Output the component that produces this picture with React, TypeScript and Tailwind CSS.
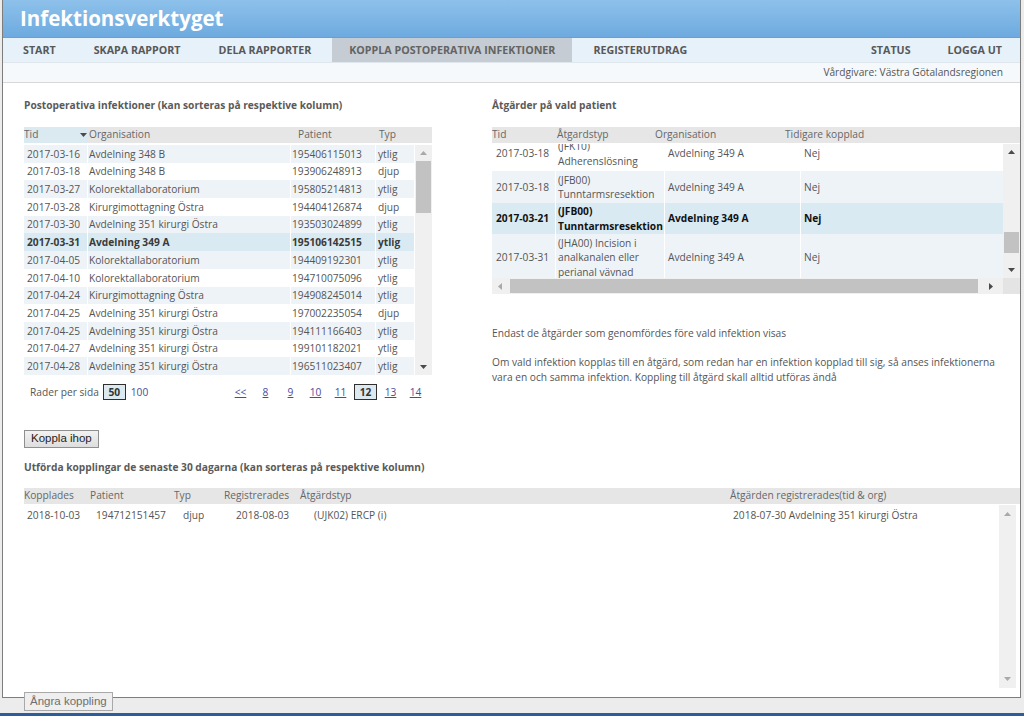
import React from "react";

const leftRows: string[][] = [
  ["2017-03-16", "Avdelning 348 B", "195406115013", "ytlig"],
  ["2017-03-18", "Avdelning 348 B", "193906248913", "djup"],
  ["2017-03-27", "Kolorektallaboratorium", "195805214813", "ytlig"],
  ["2017-03-28", "Kirurgimottagning Östra", "194404126874", "djup"],
  ["2017-03-30", "Avdelning 351 kirurgi Östra", "193503024899", "ytlig"],
  ["2017-03-31", "Avdelning 349 A", "195106142515", "ytlig"],
  ["2017-04-05", "Kolorektallaboratorium", "194409192301", "ytlig"],
  ["2017-04-10", "Kolorektallaboratorium", "194710075096", "ytlig"],
  ["2017-04-24", "Kirurgimottagning Östra", "194908245014", "ytlig"],
  ["2017-04-25", "Avdelning 351 kirurgi Östra", "197002235054", "djup"],
  ["2017-04-25", "Avdelning 351 kirurgi Östra", "194111166403", "ytlig"],
  ["2017-04-27", "Avdelning 351 kirurgi Östra", "199101182021", "ytlig"],
  ["2017-04-28", "Avdelning 351 kirurgi Östra", "196511023407", "ytlig"],
];

type RRow = { d: string; a: string[]; o: string; n: string; kind: "white" | "light" | "sel"; h: string };
const rightRows: RRow[] = [
  { d: "2017-03-18", a: ["(JFK10)", "Adherenslösning"], o: "Avdelning 349 A", n: "Nej", kind: "white", h: "h-[32px] pb-[3px]" },
  { d: "2017-03-18", a: ["(JFB00)", "Tunntarmsresektion"], o: "Avdelning 349 A", n: "Nej", kind: "light", h: "h-[32px]" },
  { d: "2017-03-21", a: ["(JFB00)", "Tunntarmsresektion"], o: "Avdelning 349 A", n: "Nej", kind: "sel", h: "h-[31px]" },
  { d: "2017-03-31", a: ["(JHA00) Incision i", "analkanalen eller", "perianal vävnad"], o: "Avdelning 349 A", n: "Nej", kind: "light", h: "h-[47px]" },
];

function Tri({ dir, dark }: { dir: "up" | "down" | "left" | "right"; dark?: boolean }) {
  const fill = dark ? "#4a4a4a" : "#a9a9a9";
  const pts =
    dir === "up" ? "0,4 7,4 3.5,0" : dir === "down" ? "0,0 7,0 3.5,4" : dir === "left" ? "4,0 4,7 0,3.5" : "0,0 0,7 4,3.5";
  const w = dir === "up" || dir === "down" ? 7 : 4;
  const h = dir === "up" || dir === "down" ? 4 : 7;
  return (
    <svg width={w} height={h} viewBox={`0 0 ${w} ${h}`}>
      <polygon points={pts} fill={fill} />
    </svg>
  );
}

const cellLight = "bg-[#eef3f8]";
const cellSel = "bg-[#d9eaf2]";

export default function App() {
  return (
    <div className="w-[1024px] h-[716px] overflow-hidden bg-[#ececec] flex flex-col font-['Open_Sans',sans-serif] text-[#555]">
      <div className="ml-[2px] mr-[3px] h-[698px] shrink-0 border-x border-b border-[#7d7d7d] bg-white flex flex-col">
        {/* Header */}
        <div className="h-[38px] shrink-0 bg-gradient-to-b from-[#8dc1eb] to-[#6eaadf] border-b border-[#6a9fd0] flex items-center pl-[17px]">
          <span className="text-white font-bold text-[20.5px] leading-none tracking-[0px]">Infektionsverktyget</span>
        </div>
        {/* Nav */}
        <div className="h-[25px] shrink-0 bg-[#e6f1fa] flex items-stretch pl-[1px] text-[10.7px] font-bold text-[#585858] border-b border-[#dfe6ec]">
          <div className="px-[19px] flex items-center">START</div>
          <div className="px-[19px] flex items-center">SKAPA RAPPORT</div>
          <div className="px-[19px] flex items-center">DELA RAPPORTER</div>
          <div className="ml-[2px] px-[17px] flex items-center bg-[#c6ccd3] text-[#636363]">KOPPLA POSTOPERATIVA INFEKTIONER</div>
          <div className="px-[21px] flex items-center">REGISTERUTDRAG</div>
          <div className="ml-auto px-[19px] flex items-center">STATUS</div>
          <div className="px-[18px] flex items-center">LOGGA UT</div>
        </div>
        {/* Vårdgivare */}
        <div className="h-[20px] shrink-0 bg-[#f5f9fc] border-b border-[#d8d8d8] flex items-center justify-end pr-[17px] text-[10.2px] text-[#555]">
          Vårdgivare: Västra Götalandsregionen
        </div>

        {/* Content */}
        <div className="flex-1 flex flex-col pl-[21px] pt-[15px] min-h-0">
          <div className="flex">
            {/* Left column */}
            <div className="w-[408px] flex flex-col">
              <div className="h-[14px] leading-[14px] text-[10.2px] font-bold text-[#5a5a5a]">
                Postoperativa infektioner (kan sorteras på respektive kolumn)
              </div>
              <div className="mt-[15px] h-[16px] bg-[#e6e6e6] flex items-center text-[10.2px] text-[#666]">
                <div className="w-[64px] h-full bg-[#dbe9f1] flex items-center justify-between pr-[1px]">
                  <span>Tid</span>
                  <Tri dir="down" dark />
                </div>
                <div className="w-[210px] pl-[1px]">Organisation</div>
                <div className="w-[81px]">Patient</div>
                <div>Typ</div>
              </div>
              <div className="mt-[2px] h-[230px] flex gap-[1px]">
                <div className="w-[390px] flex flex-col">
                  {leftRows.map((r, i) => {
                    const sel = i === 5;
                    const bg = sel ? cellSel : i % 2 === 0 ? cellLight : "bg-white";
                    return (
                      <div key={i} className={`h-[17.69px] flex gap-[1px] bg-white text-[10.2px] leading-none ${sel ? "font-bold text-[#3a3a3a]" : ""}`}>
                        <div className={`w-[63px] ${bg} flex items-center pl-[3px] whitespace-nowrap`}>{r[0]}</div>
                        <div className={`w-[202px] ${bg} flex items-center pl-[1px] whitespace-nowrap`}>{r[1]}</div>
                        <div className={`w-[84px] ${bg} flex items-center pl-[1px] whitespace-nowrap`}>{r[2]}</div>
                        <div className={`flex-1 ${bg} flex items-center pl-[2px] whitespace-nowrap`}>{r[3]}</div>
                      </div>
                    );
                  })}
                </div>
                <div className="w-[17px] bg-[#f0f0f0] flex flex-col">
                  <div className="h-[16px] flex items-center justify-center">
                    <Tri dir="up" />
                  </div>
                  <div className="mx-[1px] h-[52px] bg-[#c2c2c2]" />
                  <div className="flex-1" />
                  <div className="h-[16px] flex items-center justify-center">
                    <Tri dir="down" dark />
                  </div>
                </div>
              </div>
              {/* Pagination */}
              <div className="mt-[9px] h-[16px] flex items-center text-[10.2px] leading-none">
                <span className="ml-[6px] text-[#555]">Rader per sida</span>
                <span className="ml-[4px] w-[23px] h-[16px] border border-[#2f2f2f] bg-[#dce9f0] flex items-center justify-center font-bold text-[#333]">
                  50
                </span>
                <span className="ml-[5px] text-[#4b4b9c]">100</span>
                <div className="ml-auto mr-[4px] flex items-center text-[#4b4b9c]">
                  {["<<", "8", "9", "10", "11"].map((p) => (
                    <span key={p} className="w-[25px] text-center underline">
                      {p}
                    </span>
                  ))}
                  <span className="w-[25px] flex justify-center">
                    <span className="w-[23px] h-[16px] border border-[#2f2f2f] bg-[#dce9f0] flex items-center justify-center font-bold text-[#333]">
                      12
                    </span>
                  </span>
                  {["13", "14"].map((p) => (
                    <span key={p} className="w-[25px] text-center underline">
                      {p}
                    </span>
                  ))}
                </div>
              </div>
            </div>

            {/* Right column */}
            <div className="ml-[60px] w-[528px] flex flex-col">
              <div className="h-[14px] leading-[14px] text-[10.2px] font-bold text-[#5a5a5a]">Åtgärder på vald patient</div>
              <div className="mt-[15px] h-[16px] bg-[#e6e6e6] flex items-center text-[10.2px] text-[#666]">
                <div className="w-[65px]">Tid</div>
                <div className="w-[98px]">Åtgardstyp</div>
                <div className="w-[130px]">Organisation</div>
                <div>Tidigare kopplad</div>
              </div>
              <div className="mt-[1px] h-[134px] flex">
                <div className="w-[511px] overflow-hidden">
                  <div className="-mt-[5px] flex flex-col">
                    {rightRows.map((r, i) => {
                      const bg = r.kind === "sel" ? cellSel : r.kind === "light" ? cellLight : "bg-white";
                      const b = r.kind === "sel" ? "font-bold text-[#111]" : "";
                      return (
                        <div key={i} className={`${r.h} shrink-0 flex gap-[1px] bg-white text-[10.2px] leading-[14.5px] ${b}`}>
                          <div className={`w-[63px] ${bg} flex items-center pl-[4px] whitespace-nowrap`}>{r.d}</div>
                          <div className={`w-[108px] ${bg} flex flex-col justify-center pl-[2px] whitespace-nowrap`}>
                            {r.a.map((l, j) => (
                              <span key={j}>{l}</span>
                            ))}
                          </div>
                          <div className={`w-[135px] ${bg} flex items-center pl-[3px] whitespace-nowrap`}>{r.o}</div>
                          <div className={`flex-1 ${bg} flex items-center pl-[3px] whitespace-nowrap`}>{r.n}</div>
                        </div>
                      );
                    })}
                  </div>
                </div>
                <div className="w-[17px] bg-[#f0f0f0] flex flex-col">
                  <div className="h-[16px] flex items-center justify-center">
                    <Tri dir="up" dark />
                  </div>
                  <div className="mt-[72px] mx-[1px] h-[21px] bg-[#c2c2c2]" />
                  <div className="flex-1" />
                  <div className="h-[16px] flex items-center justify-center">
                    <Tri dir="down" dark />
                  </div>
                </div>
              </div>
              <div className="h-[16px] flex">
                <div className="w-[511px] bg-[#f0f0f0] flex items-center">
                  <div className="w-[16px] flex justify-center">
                    <Tri dir="left" />
                  </div>
                  <div className="ml-[2px] w-[468px] h-[14px] bg-[#c2c2c2]" />
                  <div className="flex-1 flex justify-center">
                    <Tri dir="right" dark />
                  </div>
                </div>
                <div className="flex-1 bg-[#e4e4e4]" />
              </div>
              <div className="mt-[32px] h-[14px] leading-[14px] text-[10.2px] text-[#555]">
                Endast de åtgärder som genomfördes före vald infektion visas
              </div>
              <div className="mt-[15px] leading-[15px] text-[10.2px] text-[#555]">
                Om vald infektion kopplas till en åtgärd, som redan har en infektion kopplad till sig, så anses infektionerna
                <br />
                vara en och samma infektion. Koppling till åtgärd skall alltid utföras ändå
              </div>
            </div>
          </div>

          {/* Koppla ihop */}
          <div className="mt-[30px] flex">
            <button className="h-[18px] px-[6px] border border-[#8f8f8f] bg-gradient-to-b from-[#f2f2f2] to-[#dedede] text-[11.5px] leading-none text-[#1e1e1e] font-['Liberation_Sans',Arial,sans-serif]">
              Koppla ihop
            </button>
          </div>
          <div className="mt-[12px] h-[14px] leading-[14px] text-[10.2px] font-bold text-[#5a5a5a]">
            Utförda kopplingar de senaste 30 dagarna (kan sorteras på respektive kolumn)
          </div>

          {/* Bottom table */}
          <div className="mt-[14px] h-[16px] bg-[#e6e6e6] flex items-center text-[10.2px] text-[#666]">
            <div className="w-[66px]">Kopplades</div>
            <div className="w-[84px]">Patient</div>
            <div className="w-[50px]">Typ</div>
            <div className="w-[76px]">Registrerades</div>
            <div className="w-[430px]">Åtgärdstyp</div>
            <div>Åtgärden registrerades(tid &amp; org)</div>
          </div>
          <div className="flex-1 flex pt-[1px] pb-[9px] pr-[4px] min-h-0">
            <div className="flex-1 pt-[1px]">
              <div className="h-[19px] flex items-center text-[10.2px] text-[#555] whitespace-nowrap">
                <div className="w-[72px] pl-[3px]">2018-10-03</div>
                <div className="w-[87px]">194712151457</div>
                <div className="w-[53px]">djup</div>
                <div className="w-[78px]">2018-08-03</div>
                <div className="w-[419px]">(UJK02) ERCP (i)</div>
                <div>2018-07-30 Avdelning 351 kirurgi Östra</div>
              </div>
            </div>
            <div className="w-[17px] bg-[#f0f0f0] flex flex-col">
              <div className="h-[18px] flex items-center justify-center">
                <Tri dir="up" />
              </div>
              <div className="flex-1" />
              <div className="h-[18px] flex items-center justify-center">
                <Tri dir="down" />
              </div>
            </div>
          </div>
        </div>
      </div>

      {/* Bottom strip */}
      <div className="flex-1 flex items-start pl-[24px]">
        <button className="relative z-10 -mt-[6px] h-[19px] px-[5px] border border-[#a9a9a9] bg-[#efefef] text-[11.5px] leading-none text-[#6e6e6e] font-['Liberation_Sans',Arial,sans-serif]">
          Ångra koppling
        </button>
      </div>
      <div className="h-[3px] shrink-0 bg-[#2c5d9a]" />
    </div>
  );
}
